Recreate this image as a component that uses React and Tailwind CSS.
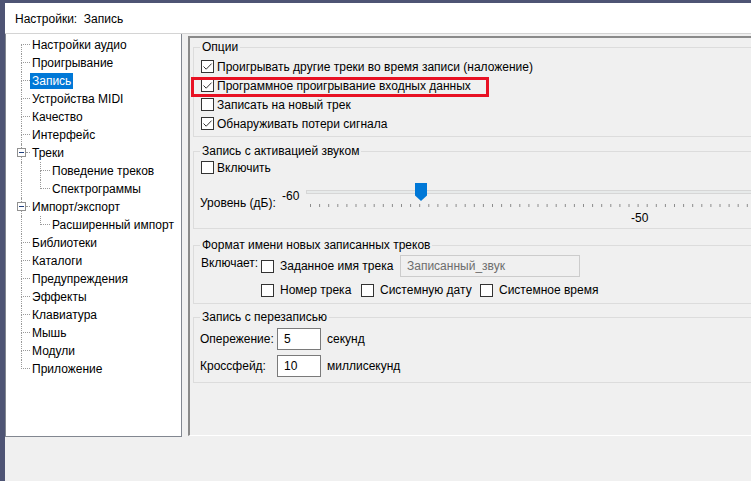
import React from 'react';

const treeItems = [
  { label: 'Настройки аудио', level: 0, first: true },
  { label: 'Проигрывание', level: 0 },
  { label: 'Запись', level: 0, selected: true },
  { label: 'Устройства MIDI', level: 0 },
  { label: 'Качество', level: 0 },
  { label: 'Интерфейс', level: 0 },
  { label: 'Треки', level: 0, expander: true },
  { label: 'Поведение треков', level: 1 },
  { label: 'Спектрограммы', level: 1, subLast: true },
  { label: 'Импорт/экспорт', level: 0, expander: true },
  { label: 'Расширенный импорт', level: 1, subLast: true },
  { label: 'Библиотеки', level: 0 },
  { label: 'Каталоги', level: 0 },
  { label: 'Предупреждения', level: 0 },
  { label: 'Эффекты', level: 0 },
  { label: 'Клавиатура', level: 0 },
  { label: 'Мышь', level: 0 },
  { label: 'Модули', level: 0 },
  { label: 'Приложение', level: 0, last: true },
];

function TreeRow({ item }) {
  const text = (
    <span
      className={`h-[16px] px-[2px] flex items-center whitespace-nowrap ${
        item.selected ? 'bg-[#0078d7] text-white' : 'text-black'
      }`}
    >
      {item.label}
    </span>
  );

  if (item.level === 1) {
    return (
      <div className="flex h-[18px] items-center">
        <div className="w-[15px] h-full shrink-0" />
        <div className="w-[19px] h-full shrink-0 border-l border-dotted border-[#9a9a9a]" />
        <div className="w-[10px] h-full shrink-0 flex flex-col">
          <div className="h-[9px] border-l border-b border-dotted border-[#9a9a9a]" />
          <div className={`flex-1 ${item.subLast ? '' : 'border-l border-dotted border-[#9a9a9a]'}`} />
        </div>
        {text}
      </div>
    );
  }

  if (item.expander) {
    return (
      <div className="flex h-[18px] items-center">
        <div className="w-[11px] h-full shrink-0" />
        <div className="w-[9px] h-full shrink-0 flex flex-col items-center">
          <div className="h-[4px] w-0 border-l border-dotted border-[#9a9a9a]" />
          <div className="w-[9px] h-[9px] border border-[#919191] bg-white flex items-center justify-center">
            <div className="w-[5px] h-px bg-[#1f3f7f]" />
          </div>
          <div className="flex-1 w-0 border-l border-dotted border-[#9a9a9a]" />
        </div>
        <div className="w-[4px] h-full shrink-0 flex flex-col">
          <div className="h-[9px] border-b border-dotted border-[#9a9a9a]" />
        </div>
        {text}
      </div>
    );
  }

  return (
    <div className="flex h-[18px] items-center">
      <div className="w-[15px] h-full shrink-0" />
      <div className="w-[9px] h-full shrink-0 flex flex-col">
        <div
          className={`h-[9px] border-b border-dotted border-[#9a9a9a] ${
            item.first ? '' : 'border-l'
          }`}
        />
        <div className={`flex-1 ${item.last ? '' : 'border-l border-dotted border-[#9a9a9a]'}`} />
      </div>
      {text}
    </div>
  );
}

function Check({ checked }) {
  return (
    <span className="w-[13px] h-[13px] border border-[#333333] bg-white shrink-0 flex items-center justify-center">
      {checked && (
        <svg width="11" height="11" viewBox="0 0 11 11">
          <path d="M1.5 5.5 L4.2 8.2 L9.6 2.6" fill="none" stroke="#333333" strokeWidth="1" />
        </svg>
      )}
    </span>
  );
}

function Group({ title, className, children }) {
  return (
    <fieldset className={`border border-[#dcdcdc] ${className}`}>
      <legend className="ml-[6px] px-[2px] leading-[14px]">{title}</legend>
      {children}
    </fieldset>
  );
}

function Ticks() {
  const ticks = [];
  for (let i = 0; i < 60; i++) {
    const x = 4.5 + i * 9.1;
    ticks.push(<line key={i} x1={x} y1="0" x2={x} y2="3" stroke="#8c8c8c" strokeWidth="1" />);
  }
  return (
    <svg width="540" height="3" className="block">
      {ticks}
    </svg>
  );
}

export default function App() {
  return (
    <div className="w-[751px] h-[481px] overflow-hidden bg-[#f0f0f0] flex font-['Liberation_Sans',Arial,sans-serif] text-[12px] leading-[14px] text-black">
      <div className="w-[5px] h-full shrink-0 bg-[#4e5474]" />
      <div className="flex-1 min-w-0 flex flex-col">
        <div className="h-[3px] shrink-0 bg-[#4e5474]" />
        {/* Title bar */}
        <div className="h-[31px] shrink-0 bg-white border-b border-[#d4d4d4] flex items-center pl-[10px] pt-[1px]">
          Настройки:&nbsp; Запись
        </div>

        <div className="flex items-start">
          {/* Tree */}
          <div className="w-[177px] h-[403px] shrink-0 bg-white border-l border-r border-b border-[#828790] pt-[2px]">
            {treeItems.map((item) => (
              <TreeRow key={item.label} item={item} />
            ))}
          </div>

          {/* Settings panel */}
          <div className="w-[620px] h-[400px] shrink-0 ml-[6px] mt-[2px] border-l-2 border-t-2 border-[#8a8a8a] border-b border-b-white pl-[3px] pt-[2px]">
            <Group title="Опции" className="pb-[3px]">
              <div className="pt-[3px] pl-[7px]">
                <div className="h-[19px] flex items-center gap-[3px]">
                  <Check checked />
                  <span>Проигрывать другие треки во время записи (наложение)</span>
                </div>
                <div className="h-[19px] flex items-center gap-[3px] relative">
                  <Check checked />
                  <span>Программное проигрывание входных данных</span>
                  <div className="absolute left-[-10px] top-[1px] w-[298px] h-[20px] border-[3px] border-[#e81123]" />
                </div>
                <div className="h-[19px] flex items-center gap-[3px]">
                  <Check />
                  <span>Записать на новый трек</span>
                </div>
                <div className="h-[19px] flex items-center gap-[3px]">
                  <Check checked />
                  <span>Обнаруживать потери сигнала</span>
                </div>
              </div>
            </Group>

            <Group title="Запись с активацией звуком" className="mt-[7px]">
              <div className="pl-[6px]">
                <div className="h-[19px] flex items-center gap-[3px] pl-[1px]">
                  <Check />
                  <span>Включить</span>
                </div>
                <div className="h-[51px] flex">
                  <div className="w-[82px] shrink-0 pt-[19px] whitespace-nowrap">Уровень (дБ):</div>
                  <div className="w-[24px] shrink-0 pt-[12px]">-60</div>
                  <div className="flex-1 pt-[13px]">
                    <div className="relative h-[4px] bg-[#e7eaea] border border-[#d6d6d6]">
                      <svg
                        width="12"
                        height="18"
                        viewBox="0 0 12 18"
                        className="absolute left-[108px] top-[-8px]"
                      >
                        <path d="M0 0 H12 V12.5 L6 18 L0 12.5 Z" fill="#0078d7" />
                      </svg>
                    </div>
                    <div className="mt-[10px]">
                      <Ticks />
                    </div>
                    <div className="mt-[4px] ml-[325px]">-50</div>
                  </div>
                </div>
              </div>
            </Group>

            <Group title="Формат имени новых записанных треков" className="mt-[9px] pb-[4px]">
              <div className="pt-[2px] pl-[7px]">
                <div className="h-[24px] flex items-center">
                  <span className="w-[60px] shrink-0 self-start mt-[2px] whitespace-nowrap">Включает:</span>
                  <div className="w-[139px] shrink-0 flex items-center gap-[6px]">
                    <Check />
                    <span>Заданное имя трека</span>
                  </div>
                  <div className="w-[180px] h-[22px] border border-[#cccccc] bg-[#f0f0f0] text-[#6d6d6d] pl-[6px] flex items-center">
                    Записанный_звук
                  </div>
                </div>
                <div className="h-[18px] mt-[3px] flex items-center pl-[60px]">
                  <div className="w-[100px] shrink-0 flex items-center gap-[6px]">
                    <Check />
                    <span>Номер трека</span>
                  </div>
                  <div className="w-[119px] shrink-0 flex items-center gap-[6px]">
                    <Check />
                    <span>Системную дату</span>
                  </div>
                  <div className="flex items-center gap-[6px]">
                    <Check />
                    <span>Системное время</span>
                  </div>
                </div>
              </div>
            </Group>

            <Group title="Запись с перезаписью" className="mt-[6px] pb-[5px]">
              <div className="pt-[4px] pl-[6px] flex flex-col gap-[5px]">
                <div className="h-[22px] flex items-center">
                  <span className="w-[77px] shrink-0">Опережение:</span>
                  <div className="w-[44px] h-[22px] border border-[#7a7a7a] bg-white pl-[6px] flex items-center">5</div>
                  <span className="ml-[6px]">секунд</span>
                </div>
                <div className="h-[22px] flex items-center">
                  <span className="w-[77px] shrink-0">Кроссфейд:</span>
                  <div className="w-[44px] h-[22px] border border-[#7a7a7a] bg-white pl-[6px] flex items-center">10</div>
                  <span className="ml-[6px]">миллисекунд</span>
                </div>
              </div>
            </Group>
          </div>
        </div>
      </div>
    </div>
  );
}
